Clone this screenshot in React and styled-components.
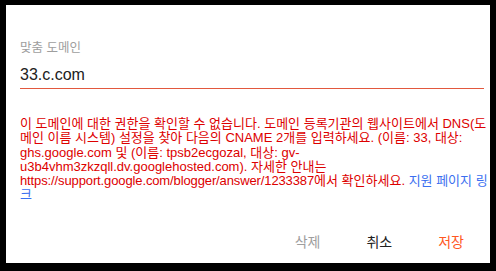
import React from "react";
import styled, { createGlobalStyle } from "styled-components";

const Global = createGlobalStyle`
  html, body { margin: 0; padding: 0; background: #000; }
  body { font-family: "Liberation Sans", Arial, "Noto Sans CJK KR", sans-serif; }
`;

const Page = styled.div`
  padding: 5px 0 0 6px;
`;

const Dialog = styled.div`
  width: 484px;
  height: 258px;
  background: #fff;
  display: flex;
  flex-direction: column;
  box-sizing: border-box;
  padding: 36px 0 0 14px;
`;

const Label = styled.div`
  font-size: 12.5px;
  line-height: 14px;
  color: #9e9e9e;
`;

const Input = styled.div`
  margin: 10px 6px 0 0;
  font-size: 16px;
  line-height: 20px;
  color: #212121;
  padding-bottom: 3px;
  border-bottom: 1px solid #e2583e;
`;

const ErrorText = styled.div`
  margin-top: 28px;
  font-size: 13px;
  line-height: 14.3px;
  color: #dd0000;
`;

const Url = styled.span`
  letter-spacing: -0.12px;
`;

const Link = styled.a`
  color: #3b6ff0;
  text-decoration: none;
`;

const Actions = styled.div`
  margin-top: auto;
  display: flex;
  justify-content: flex-end;
  gap: 26px;
  padding: 0 16px 13px 0;
`;

const Button = styled.button`
  background: none;
  border: none;
  padding: 0 10px;
  font-family: "Liberation Sans", Arial, "Noto Sans CJK KR", sans-serif;
  font-size: 14px;
  line-height: 16px;
  color: ${(p) => p.$color};
  cursor: pointer;
`;

export default function App() {
  return (
    <>
      <Global />
      <Page>
        <Dialog>
          <Label>맞춤 도메인</Label>
          <Input>33.c.com</Input>
          <ErrorText>
            이 도메인에 대한 권한을 확인할 수 없습니다. 도메인 등록기관의 웹사이트에서 DNS(도메인 이름 시스템) 설정을 찾아 다음의 CNAME 2개를 입력하세요. (이름: 33, 대상: ghs.google.com 및 (이름: tpsb2ecgozal, 대상: gv-u3b4vhm3zkzqll.dv.googlehosted.com). 자세한 안내는{" "}
            <Url>https://support.google.com/blogger/answer/1233387</Url>에서 확인하세요.{" "}
            <Link href="#">지원 페이지 링크</Link>
          </ErrorText>
          <Actions>
            <Button $color="#9e9e9e">삭제</Button>
            <Button $color="#212121">취소</Button>
            <Button $color="#ff5722">저장</Button>
          </Actions>
        </Dialog>
      </Page>
    </>
  );
}
